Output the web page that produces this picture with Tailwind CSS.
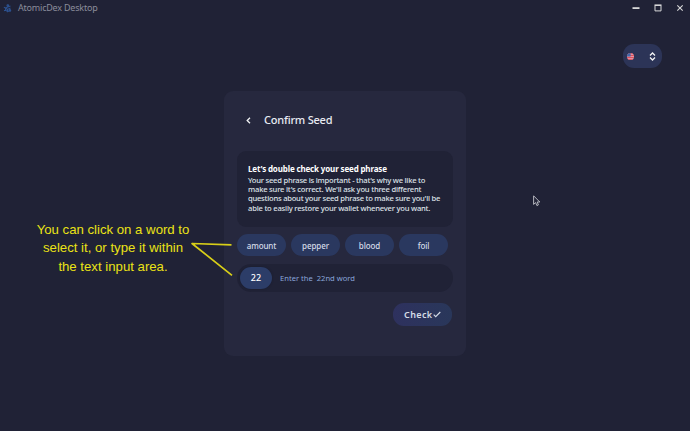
<!DOCTYPE html>
<html lang="en">
<head>
<meta charset="utf-8">
<title>AtomicDex Desktop</title>
<script src="https://cdn.jsdelivr.net/npm/@tailwindcss/browser@4"></script>
</head>
<body class="relative w-[690px] h-[431px] overflow-hidden bg-[#202236] font-['Noto_Sans',sans-serif] text-[#e8ebf2]">
  <header class="h-4 flex items-center justify-between pl-[3px] pr-[6px]">
    <div class="flex items-center gap-[6px]">
      <svg class="size-[9px]" viewBox="0 0 9 9" fill="none" stroke="#2c518f" stroke-width="1.1"><path d="M4.8.8v2.1L2.6 4.1.9 3.2M4.8 2.9l2.6-1M2.6 4.1v2.2l2.2 1.4 2-1.2V4.3L4.6 5.4 2.6 4.1M4.6 5.4v2.8M1 6.6l1.6-.3"/><circle cx="4.8" cy="1.5" r=".8"/><circle cx="7" cy="6.6" r=".7"/></svg>
      <span class="text-[9px] leading-4 tracking-[-0.21px] text-[#8b8d9b]">AtomicDex Desktop</span>
    </div>
    <div class="flex items-center gap-[14px]">
      <svg class="w-[8px] h-[8px]" viewBox="0 0 8 8"><path d="M.5 3.2h7v1.8h-7z" fill="#d7d8d9"/></svg>
      <svg class="w-[8px] h-[8px]" viewBox="0 0 8 8" fill="none" stroke="#d7d8d9"><path d="M1 1.5h6v5.4H1z"/><path d="M.5 1.1h7" stroke-width="1.4"/></svg>
      <svg class="w-[8px] h-[8px]" viewBox="0 0 8 8" fill="none" stroke="#d7d8d9" stroke-width="1.1"><path d="M1.3 1.3l5.4 5.4m0-5.4L1.3 6.7"/></svg>
    </div>
  </header>

  <div class="flex justify-end pt-7 pr-7">
    <div class="w-[39px] h-6 rounded-[11px] bg-[#2c3457] flex items-center justify-between pl-[4px] pr-[6px]">
      <svg class="size-[7px]" viewBox="0 0 7 7"><clipPath id="r"><circle cx="3.5" cy="3.5" r="3.5"/></clipPath><g clip-path="url(#r)"><path fill="#e39aa5" d="M0 0h7v7H0z"/><path stroke="#dc4f5e" stroke-width="1" d="M0 .6h7M0 2.5h7M0 4.5h7M0 6.4h7"/><path fill="#3f69ad" d="M0 0h3.6v3.6H0z"/></g></svg>
      <svg class="w-[7px] h-[9px]" viewBox="0 0 7 9" fill="none" stroke="#f2f4f5" stroke-width="1.3"><path d="M1 3.5 3.5 1 6 3.5M1 5.5 3.5 8 6 5.5"/></svg>
    </div>
  </div>

  <main class="ml-[224px] mt-[23px] w-[242px] h-[265px] rounded-[9px] bg-[#26283e] px-[13px] pt-[20px]">
    <div class="flex items-center h-[18px] pl-[9px]">
      <svg class="w-[5px] h-[7px]" viewBox="0 0 5 7" fill="none" stroke="#f1f3f4" stroke-width="1.3"><path d="M4 .8 1.2 3.5 4 6.2"/></svg>
      <h1 class="ml-[13px] text-[11px] leading-[18px] font-medium tracking-[-0.22px] whitespace-nowrap">Confirm Seed</h1>
    </div>
    <section class="mt-[22px] w-[216px] h-[76px] rounded-[9px] bg-[#202236] pl-[11px] pt-[11px] whitespace-nowrap">
      <h2 class="mb-[1px] text-[8px] leading-[13px] font-bold tracking-[-0.15px] text-white">Let's double check your seed phrase</h2>
      <p class="text-[7.6px] leading-[9.2px] font-medium text-[#dfe2e9]">
        <span class="block tracking-[-0.23px]">Your seed phrase is important - that's why we like to</span>
        <span class="block tracking-[-0.2px]">make sure it's correct. We'll ask you three different</span>
        <span class="block tracking-[-0.24px]">questions about your seed phrase to make sure you'll be</span>
        <span class="block tracking-[-0.21px]">able to easily restore your wallet whenever you want.</span>
      </p>
    </section>
    <div class="mt-[7px] flex gap-[5px] text-[8px] leading-[23px] tracking-[-0.1px] font-medium text-center text-[#d5dbe7]">
      <div class="w-[49px] h-[22px] rounded-full bg-[#2a385f]">amount</div>
      <div class="w-[49px] h-[22px] rounded-full bg-[#2a385f]">pepper</div>
      <div class="w-[49px] h-[22px] rounded-full bg-[#2a385f]">blood</div>
      <div class="w-[49px] h-[22px] rounded-full bg-[#2a385f]">foil</div>
    </div>
    <div class="mt-[8px] w-[216px] h-[28px] rounded-full bg-[#202236] flex items-center pl-[3px]">
      <span class="w-[32px] h-[22px] rounded-full bg-[#2c3d68] text-center text-[9px] leading-[22px] font-medium text-white shadow-[0_0_2px_#181b2c]">22</span>
      <span class="ml-[8px] text-[7.6px] leading-[22px] whitespace-pre text-[#8aa6da]">Enter the  22nd word</span>
    </div>
    <div class="mt-[11px] flex justify-end pr-[1px]">
      <div class="w-[59px] h-[23px] rounded-[11px] bg-linear-to-r from-[#2e315e] to-[#29375a] flex items-center pl-[11px] text-[#d4dbe6]">
        <span class="text-[9px] leading-[23px] font-semibold tracking-[0.4px]">Check</span>
        <svg class="w-[8px] h-[7px]" viewBox="0 0 8 7" fill="none" stroke="currentColor" stroke-width="1.1"><path d="m.7 3.7 2 2L7.3 1"/></svg>
      </div>
    </div>
  </main>

  <p class="absolute left-[13px] top-[221px] w-[200px] text-center font-['Liberation_Sans',sans-serif] text-[13.2px] leading-[18.4px] text-[#ebe315]">You can click on a word to<br>select it, or type it within<br>the text input area.</p>
  <svg class="absolute left-[190px] top-[240px] w-[44px] h-[38px]" viewBox="0 0 44 38" fill="none" stroke="#d8cf18" stroke-width="1.7"><path d="M41.5 4.8 2 3.5l40 31.8" stroke-linejoin="round"/></svg>
  <svg class="absolute left-[533px] top-[195px] w-[8px] h-[12px]" viewBox="0 0 8 12"><path d="M.6.8v8.6l2-1.8 1.3 3 1.5-.7L4.2 7h2.6z" fill="#25273a" stroke="#c4c5cc" stroke-width=".9"/></svg>
</body>
</html>
